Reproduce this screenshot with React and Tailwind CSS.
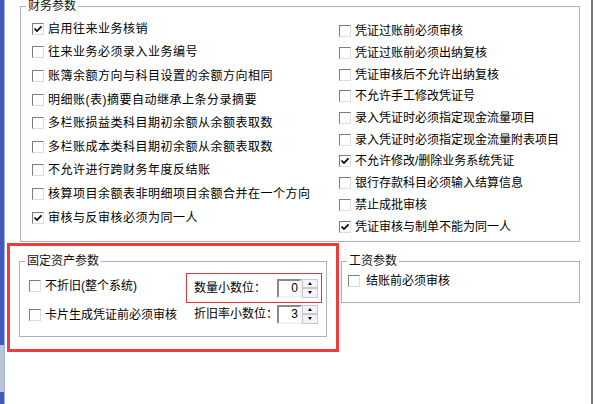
const FONT = "font-['Liberation_Sans','Noto_Sans_CJK_SC',sans-serif]";

const leftOptions = [
  { label: '启用往来业务核销', checked: true },
  { label: '往来业务必须录入业务编号' },
  { label: '账簿余额方向与科目设置的余额方向相同' },
  { label: '明细账(表)摘要自动继承上条分录摘要' },
  { label: '多栏账损益类科目期初余额从余额表取数' },
  { label: '多栏账成本类科目期初余额从余额表取数' },
  { label: '不允许进行跨财务年度反结账' },
  { label: '核算项目余额表非明细项目余额合并在一个方向' },
  { label: '审核与反审核必须为同一人', checked: true },
];

const rightOptions = [
  { label: '凭证过账前必须审核' },
  { label: '凭证过账前必须出纳复核' },
  { label: '凭证审核后不允许出纳复核' },
  { label: '不允许手工修改凭证号' },
  { label: '录入凭证时必须指定现金流量项目' },
  { label: '录入凭证时必须指定现金流量附表项目' },
  { label: '不允许修改/删除业务系统凭证', checked: true },
  { label: '银行存款科目必须输入结算信息' },
  { label: '禁止成批审核' },
  { label: '凭证审核与制单不能为同一人', checked: true },
];

function CheckBox({ checked }) {
  return (
    <span className="flex h-[12px] w-[12px] shrink-0 items-center justify-center border border-t-[#7c7c7c] border-l-[#7c7c7c] border-b-[#dcdce6] border-r-[#dcdce6] bg-white">
      {checked ? (
        <svg width="10" height="10" viewBox="0 0 10 10">
          <path d="M1.5 4.5 L4 7 L8.5 2.3" fill="none" stroke="#000" strokeWidth="1.7" />
        </svg>
      ) : null}
    </span>
  );
}

function CheckRow({ label, checked, className = '', textClass = '' }) {
  return (
    <div className={`flex items-center gap-[4px] ${className}`}>
      <CheckBox checked={checked} />
      <span className={`whitespace-nowrap text-[12px] leading-[14px] text-black ${textClass}`}>{label}</span>
    </div>
  );
}

function GroupBox({ title, className = '', children }) {
  return (
    <fieldset className={`border border-[#aeadc2] p-0 ${className}`}>
      <legend className="ml-[5px] px-[2px] text-[12px] leading-[12px] text-[#111]">{title}</legend>
      {children}
    </fieldset>
  );
}

function SpinField({ label, value, boxed }) {
  return (
    <div
      className={`flex items-center pl-[7px] pr-[3px] ${
        boxed ? 'h-[30px] border border-[#e8333a]' : 'h-[22px] border border-transparent'
      }`}
    >
      <span className="w-[83px] whitespace-nowrap text-[12px] leading-[14px] text-black">{label}</span>
      <div className="flex h-[19px] w-[25px] items-center justify-end border-2 border-t-[#8a8a8a] border-l-[#8a8a8a] border-b-[#f2f2f2] border-r-[#f2f2f2] bg-white pr-[2px] text-[12px] leading-[12px] text-black">
        {value}
      </div>
      <div className="flex h-[19px] w-[16px] flex-col">
        <span className="flex h-[9.5px] items-center justify-center border border-[#c9c7d6] bg-[#f3f3f6]">
          <span className="h-0 w-0 border-x-[2px] border-b-[3px] border-x-transparent border-b-black" />
        </span>
        <span className="flex h-[9.5px] items-center justify-center border border-[#c9c7d6] bg-[#f3f3f6]">
          <span className="h-0 w-0 border-x-[2px] border-t-[3px] border-x-transparent border-t-black" />
        </span>
      </div>
    </div>
  );
}

export default function App() {
  return (
    <div className={`flex h-[404px] w-[596px] overflow-hidden bg-white ${FONT}`}>
      <div className="flex w-[5px] flex-col border-r border-[#9fb0e6]">
        <div className="h-[345px] bg-[#3f58bb]" />
        <div className="h-[47px] bg-[#b9c3d6]" />
        <div className="flex-1 bg-[#3f58bb]" />
      </div>

      <div className="flex w-[586px] flex-col">
        <GroupBox title="财务参数" className="ml-[15px] h-[242px] w-[560px]">
          <div className="flex pl-[11px]">
            <div className="flex w-[307px] flex-col pt-[5px]">
              {leftOptions.map((opt) => (
                <CheckRow
                  key={opt.label}
                  label={opt.label}
                  checked={opt.checked}
                  className="h-[23.6px]"
                  textClass="tracking-[0.5px]"
                />
              ))}
            </div>
            <div className="flex flex-col pt-[8.5px]">
              {rightOptions.map((opt) => (
                <CheckRow key={opt.label} label={opt.label} checked={opt.checked} className="h-[21.7px]" />
              ))}
            </div>
          </div>
        </GroupBox>

        <div className="mt-[1px] flex items-start">
          <div className="ml-[2px] h-[109px] w-[332px] border-[3px] border-[#ee3b3b]">
            <GroupBox title="固定资产参数" className="ml-[9px] mt-[9px] h-[82px] w-[308px]">
              <div className="flex">
                <div className="flex w-[166px] flex-col pl-[9px] pt-[4px]">
                  <CheckRow label="不折旧(整个系统)" className="h-[29px]" />
                  <CheckRow label="卡片生成凭证前必须审核" className="h-[29px]" />
                </div>
                <div className="flex flex-col pt-[6px]">
                  <SpinField label="数量小数位：" value="0" boxed />
                  <SpinField label="折旧率小数位：" value="3" />
                </div>
              </div>
            </GroupBox>
          </div>

          <GroupBox title="工资参数" className="ml-[2px] mt-[12px] h-[48px] w-[239px]">
            <div className="pl-[6px] pt-[8px]">
              <CheckRow label="结账前必须审核" className="h-[12px] gap-[6px]" />
            </div>
          </GroupBox>
        </div>
      </div>

      <div className="w-[2px] bg-[#7b7b7b]" />
      <div className="w-[3px]" />
    </div>
  );
}
